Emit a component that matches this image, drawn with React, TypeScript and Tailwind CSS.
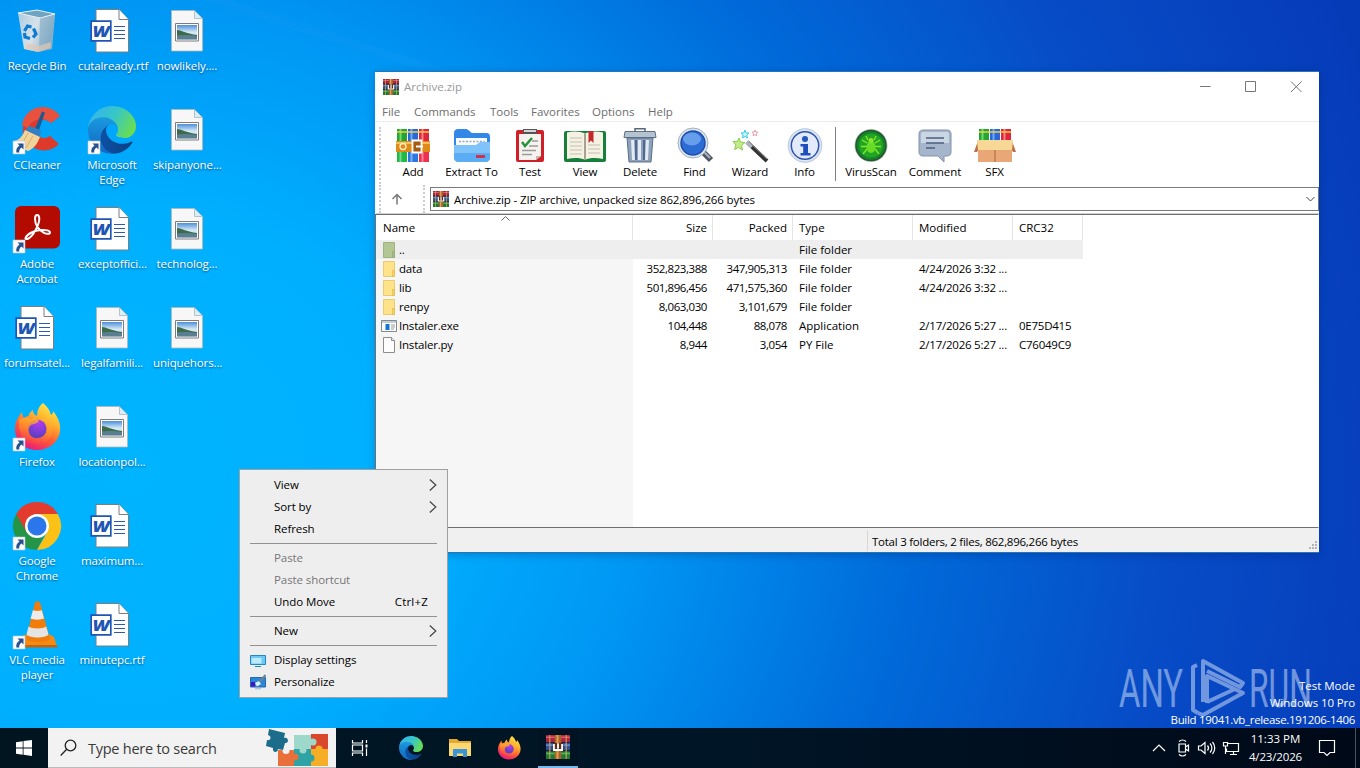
import type { ReactNode } from "react";

function Shortcut() {
    return (
        <g transform="translate(0 35)">
            <path d="M0 0h12v13H0z" fill="#fbfbfd" stroke="#b9c7d6" strokeWidth=".6" />
            <path
                d="M4.5 2.5h6v6l-1.9-1.9C6.6 8 6 9.6 6.2 11.5H3.4C2.8 8.5 3.9 6.3 6.5 4.5z"
                fill="#27508f"
            />
        </g>
    );
}

function Svg48({ children }: { children: ReactNode }) {
    return (
        <svg className="block h-12 w-12 overflow-visible" viewBox="0 0 48 48">
            {children}
        </svg>
    );
}

function RecycleBin() {
    return (
        <Svg48>
            <defs>
                <linearGradient id="bin" x1="0" x2="1" y2=".4">
                    <stop offset="0" stopColor="#a9cbdf" />
                    <stop offset=".55" stopColor="#d6e2ea" />
                    <stop offset="1" stopColor="#8fb3c9" />
                </linearGradient>
            </defs>
            <path d="M5 6 24 3l18 4-3 35-14 3-14-3z" fill="url(#bin)" />
            <path d="M27 11 42 7l-4 35-12 3z" fill="#7fa9c4" opacity=".6" />
            <path d="m5 6 19-3 18 4-15 4z" fill="#6fa3c2" stroke="#e9f1f5" />
            <path d="m14 36 11 3 13-4-.5 6L25 45l-13-3z" fill="#e2c7b4" opacity=".7" />
            <g fill="none" stroke="#0f7ad2" strokeWidth="3.2">
                <path d="m11.5 24 3-5 4 1" />
                <path d="m20.5 21.5 2.5 5.5-3 3.5" />
                <path d="M17 31.5 12 30l-.5-4" />
            </g>
        </Svg48>
    );
}

function WordDoc() {
    return (
        <Svg48>
            <path d="M8 2.5h23l9.5 10V45H8z" fill="#fff" stroke="#7d7d7d" />
            <path d="M31 2.5v10h9.5" fill="#fff" stroke="#7d7d7d" />
            <path
                d="M26 19.5h11M26 23.5h11M26 27.5h11M26 31.5h11"
                stroke="#2b5ab5"
                strokeWidth="1.2"
            />
            <path d="M3.2 14.2h19.6v19.6H3.2z" fill="#fff" stroke="#1f56b4" strokeWidth="1.7" />
            <text
                x="13"
                y="30"
                textAnchor="middle"
                textLength="17"
                lengthAdjust="spacingAndGlyphs"
                fill="#1f56b4"
                className="font-['Open_Sans',sans-serif] text-[16.5px] font-extrabold italic"
            >
                W
            </text>
        </Svg48>
    );
}

function ImageDoc() {
    return (
        <Svg48>
            <defs>
                <linearGradient id="sky" x2="0" y2="1">
                    <stop offset="0" stopColor="#4d8edb" />
                    <stop offset=".5" stopColor="#d5eaf5" />
                    <stop offset="1" stopColor="#b9d2dc" />
                </linearGradient>
            </defs>
            <path d="M8.5 3.5h23l8 8V44h-31z" fill="#f7f7f7" stroke="#b5b5b5" strokeWidth=".8" />
            <path d="M31.5 3.5v8h8z" fill="#d9eef6" stroke="#a9b5bb" strokeWidth=".8" />
            <path d="M12.5 16.5h23V34h-23z" fill="#fff" stroke="#7c7c7c" />
            <path d="M14 18h20v14.5H14z" fill="url(#sky)" />
            <path d="M14 23c5 .5 10 3.5 20 5v1H14z" fill="#3c6b4a" />
            <path d="M14 28.5c6-1 12-.5 20 .5v3.5H14z" fill="#5b7f92" />
        </Svg48>
    );
}

function CCleaner() {
    return (
        <Svg48>
            <path d="M47 10A21 21 0 1 0 46 38l-9-8a9 9 0 1 1 1-13z" fill="#dd3a2c" />
            <path d="M47 10A21 21 0 0 0 9 19l6 3a14 14 0 0 1 23-5z" fill="#e8513e" />
            <path d="M29 5.5 32 6.5 26 24l-4-1.5z" fill="#1c5a96" />
            <path d="m16 20 12 4-1.5 7L12 25z" fill="#2f80c4" />
            <path d="M12 24 27 31c-3 8-7 12-12 14C9 43 4 39 1 35c6-1 9-6 11-11z" fill="#f2d49b" />
            <path d="m15 27-7 13M20 30l-7 12" stroke="#d7ae6a" />
            <Shortcut />
        </Svg48>
    );
}

function EdgeLogo() {
    return (
        <>
            <defs>
                <linearGradient id="edgeDark" x1=".2" x2="1" y1=".7" y2=".7">
                    <stop offset="0" stopColor="#0c4fa0" />
                    <stop offset="1" stopColor="#0b3f82" />
                </linearGradient>
                <linearGradient id="edgeBlue" x1=".5" x2=".4" y1="0" y2="1">
                    <stop offset="0" stopColor="#1b9de2" />
                    <stop offset="1" stopColor="#1367c0" />
                </linearGradient>
                <linearGradient id="edgeGreen" x1="0" x2="1" y1=".2" y2=".6">
                    <stop offset="0" stopColor="#35b4ef" />
                    <stop offset=".5" stopColor="#36c6c9" />
                    <stop offset="1" stopColor="#6ade50" />
                </linearGradient>
            </defs>
            <path
                fill="url(#edgeDark)"
                d="M231.1 190.5c-3.4 1.8-6.9 3.4-10.5 4.7a101.9 101.9 0 0 1-35.9 6.5c-47.3 0-88.5-32.5-88.5-74.3A31.5 31.5 0 0 1 112.6 100c-42.8 1.8-53.8 46.4-53.8 72.5 0 73.9 68.1 81.4 82.8 81.4 7.9 0 19.8-2.3 27-4.6l1.3-.4a128.3 128.3 0 0 0 66.6-52.8 4 4 0 0 0-5.4-5.6z"
            />
            <path
                fill="url(#edgeBlue)"
                d="M105.7 241.4a79.2 79.2 0 0 1-22.7-21.3 80.7 80.7 0 0 1 29.5-120c3.2-1.5 8.5-4.1 15.6-4a32.4 32.4 0 0 1 25.7 13 31.9 31.9 0 0 1 6.3 18.7c0-.2 24.5-79.6-80-79.6-43.9 0-80 41.6-80 78.2 0 19 4.1 38 11.9 55.4a128 128 0 0 0 156.4 67 75.5 75.5 0 0 1-62.7-7.4z"
            />
            <path
                fill="url(#edgeGreen)"
                d="M152.3 148.9c-.8 1-3.3 2.5-3.3 5.7 0 2.6 1.7 5.1 4.7 7.2 14.4 10 41.5 8.7 41.6 8.7 10.7 0 21.1-2.9 30.3-8.3a61.4 61.4 0 0 0 30.4-52.9c.3-22.4-8-37.3-11.3-43.9C223.5 23.9 177.7 0 128 0A128 128 0 0 0 0 126.2c.5-36.5 36.8-66 80-66 3.5 0 23.5.3 42 10.1 16.3 8.6 24.9 18.9 30.8 29.2 6.2 10.7 7.3 24.2 7.3 29.6 0 5.4-2.7 13.3-7.8 19.9z"
            />
        </>
    );
}

function Edge() {
    return (
        <Svg48>
            <g transform="scale(.1875)">
                <EdgeLogo />
            </g>
            <Shortcut />
        </Svg48>
    );
}

function Acrobat() {
    return (
        <Svg48>
            <rect x="2" y="1" width="45" height="42.5" rx="6" fill="#b30b00" />
            <path
                d="M12.5 33c2-4.5 9-7.5 15.5-8 5-.4 9 .6 9 2.4s-3.5 1.8-6 .4c-6-3.3-9-9-9-14 0-5 4.3-5 4.3 0 0 6-6.3 17.5-10.8 19.7-1.8.8-3.6.7-3-.5z"
                fill="none"
                stroke="#fff"
                strokeWidth="2"
            />
            <Shortcut />
        </Svg48>
    );
}

function FirefoxLogo() {
    return (
        <>
            <defs>
                <linearGradient id="foxBody" x1=".8" x2=".3" y1="0" y2="1">
                    <stop offset="0" stopColor="#fff04a" />
                    <stop offset=".35" stopColor="#ffb02e" />
                    <stop offset=".65" stopColor="#ff5a36" />
                    <stop offset="1" stopColor="#e8187f" />
                </linearGradient>
                <linearGradient id="foxRing" x1=".7" x2=".3" y1="0" y2="1">
                    <stop offset="0" stopColor="#ffc02e" />
                    <stop offset=".5" stopColor="#ff8a2b" />
                    <stop offset="1" stopColor="#f8344f" />
                </linearGradient>
                <radialGradient id="foxCore" cx=".6" cy=".2" r=".9">
                    <stop offset="0" stopColor="#b13af0" />
                    <stop offset="1" stopColor="#4b40b8" />
                </radialGradient>
            </defs>
            <path
                d="M30 0c5 4 7 8 8 12 2-1 2-3 2-4 5 6 8 13 7 20C46 39 36 47 24 47 11 47 2 38 2 26c0-7 3-12 7-17 0 3 1 5 2 6 1-1 3-2 5-2-1-1 2-5 4-6 0 3 1 5 4 6C24 8 26 3 30 0z"
                fill="url(#foxBody)"
            />
            <circle cx="24" cy="26" r="9.5" fill="url(#foxCore)" />
            <path
                d="M6 17c4-3 9-2 12-1 4-1 7 0 8 2-2 3-6 3-8 4-2 2-3 4-2 7 1 4 4 6 8 6 6 0 10-4 10-10 0-5-3-8-5-9 8 1 12 7 10 14-2 8-8 11-15 11C13 41 5 33 6 17z"
                fill="url(#foxRing)"
                opacity=".8"
            />
        </>
    );
}

function Firefox() {
    return (
        <Svg48>
            <FirefoxLogo />
            <Shortcut />
        </Svg48>
    );
}

function Chrome() {
    return (
        <Svg48>
            <path d="M24 24 3.2 12A24 24 0 0 0 24 48l9-18z" fill="#249446" />
            <path d="M24 12h20.8A24 24 0 0 1 24 48l10.4-18z" fill="#fbc116" />
            <path d="M24 12h20.8A24 24 0 0 0 3.2 12l10.4 18z" fill="#e33b2e" />
            <circle cx="24" cy="24" r="12" fill="#fff" />
            <circle cx="24" cy="24" r="9.5" fill="#2a76ea" />
            <Shortcut />
        </Svg48>
    );
}

function Vlc() {
    return (
        <Svg48>
            <path d="m11 34-3 2-2 9.5h38L41 36l-3-2z" fill="#f58a12" />
            <path d="M6 44h38l.4 2.5H5.5z" fill="#c9630a" />
            <path d="M22 1.5c1-1.3 4-1.3 5 0L37 38c-3 4-21 4-24 0z" fill="#f07c0c" />
            <path d="m20 9-2.4 8.5c3 1.5 10 1.5 13.4 0L28.8 9c-2 1.2-6.8 1.2-8.8 0z" fill="#ececec" />
            <path d="m15.5 25.5-2 8c3 4 19 4 22 0l-2.3-8c-3 2.6-14.7 2.6-17.7 0z" fill="#e4e4e4" />
            <Shortcut />
        </Svg48>
    );
}

function WinRar({ className }: { className: string }) {
    return (
        <svg className={className} viewBox="0 0 16 16">
            <path d="M0 0h16v5.3H0z" fill="#a82443" />
            <path d="M0 5.3h16v5.4H0z" fill="#2b4f9c" />
            <path d="M0 10.7h16V16H0z" fill="#1f7a38" />
            <path d="M0 1h16v1H0z" fill="#e5576b" />
            <path d="M0 6.2h16v1.1H0z" fill="#5a8de0" />
            <path d="M0 11.7h16v1.2H0z" fill="#4bb45a" />
            <path d="M0 4.6h16v.8H0zM0 10h16v.8H0z" fill="#281c33" />
            <path d="M2 0h1v16H2zM13 0h1v16h-1z" fill="#d9a548" opacity=".7" />
            <path d="M5.8 0h4.4v16H5.8z" fill="#a8622a" />
            <path d="M7 0h1.3v16H7z" fill="#e7a14d" />
            <path d="M4.5 5.3h7v5.4h-7z" fill="#5a2f18" />
            <path d="M5.3 6v4h5.4V6M8 5.5v3.7" fill="none" stroke="#fff" strokeWidth="1.2" />
        </svg>
    );
}

function Books() {
    return (
        <>
            <path d="M2 1h10v12H2z" fill="#25a533" />
            <path d="M13 1h10v12H13z" fill="#2869d8" />
            <path d="M24 1h10v12H24z" fill="#e0263d" />
            <path d="M4.5 1h2v12h-2z" fill="#74dc6c" />
            <path d="M15.5 1h2v12h-2z" fill="#75a9f6" />
            <path d="M26.5 1h2v12h-2z" fill="#ff8181" />
            <path d="M2 4h32" stroke="#f1cf45" strokeWidth="1.5" />
        </>
    );
}

const toolIcons: Record<string, ReactNode> = {
    Add: (
        <>
            <Books />
            <path d="M2 13h10v21H2z" fill="#21ba45" />
            <path d="M13 13h10v21H13z" fill="#2a78e4" />
            <path d="M24 13h10v21H24z" fill="#ef3150" />
            <path d="M4.5 13h2v21h-2zM15.5 13h2v21h-2zM26.5 13h2v21h-2z" fill="#fff" opacity=".4" />
            <path d="M1 13h34v11H1z" fill="#e08a17" />
            <path d="M1 14h34v2H1z" fill="#f8bf5c" />
            <circle cx="8" cy="18.5" r="3" fill="none" stroke="#fff1c9" strokeWidth="1.3" />
            <path d="M17.5 12.5h9v12h-9z" fill="#a65b10" stroke="#fff" strokeWidth="1.8" />
            <path d="M21 18.5h7" stroke="#fff" strokeWidth="2" />
        </>
    ),
    "Extract To": (
        <>
            <path d="M0 5c0-3 2-4 4-4h8c3 0 4 4 7 4h13c3 0 4 1 4 4v20H0z" fill="#3387e6" />
            <path d="M2 10h31v14H2z" fill="#f9fcff" />
            <path d="M5 13.5h26" stroke="#9aa8b8" strokeWidth="1.3" strokeDasharray="2 1.5" />
            <path d="M0 17h22l4-3h10v16c0 2-2 4-4 4H4c-2 0-4-2-4-4z" fill="#7fc3fa" />
            <path d="M0 25h36v5c0 2-2 4-4 4H4c-2 0-4-2-4-4z" fill="#5badf5" />
            <path d="M22 28.5h9" stroke="#d82c3c" strokeWidth="2.8" />
        </>
    ),
    Test: (
        <>
            <rect x="4" y="2" width="28" height="32" rx="2" fill="#cf2029" />
            <path d="M7 6h22v22l-5 4H7z" fill="#f6f3ee" />
            <path d="M24 32v-4h5z" fill="#b9b9b9" />
            <path d="M11 1h14v5H11z" fill="#555" />
            <path d="M12 2h12v2H12z" fill="#d5d5d5" />
            <path d="m10 14 3 4 7-8" fill="none" stroke="#23953c" strokeWidth="2.5" />
            <path d="M17 18h9M10 22.5h14M10 26.5h10M20 13h6" stroke="#9a9a9a" strokeWidth="1.3" />
        </>
    ),
    View: (
        <g transform="translate(-3)">
            <rect x="0" y="3" width="42" height="31" rx="2" fill="#16803a" />
            <path d="M3 4.5c7-2 14-1 18 1 4-2 11-3 18-1V31c-7-1.5-14-1-18 .8-4-1.8-11-2.3-18-.8z" fill="#f6f2e3" />
            <path d="M21 5.5v26" stroke="#8c8672" strokeWidth="1.5" />
            <path
                d="M6 10h12M6 14h12M6 18h12M6 22h12M6 26h12M24 17h12M24 21h12M24 25h12"
                stroke="#c3bfb2"
                strokeWidth="1.2"
            />
            <path d="M24.5 3h5v12l-2.5-2.5-2.5 2.5z" fill="#c7252d" />
        </g>
    ),
    Delete: (
        <>
            <path d="M13 3V.8h10V3" fill="none" stroke="#596878" strokeWidth="1.5" />
            <path d="M3 3.5h30l1 6H2z" fill="#b5c2d0" stroke="#5d6f84" />
            <path d="M5 10h26l-2 24H7z" fill="#8ca1bb" stroke="#5d6f84" />
            <path d="M9 12h3l1 20H10zM16 12h3v20h-3zM24 12h3l-1 20h-3z" fill="#e1eaf4" />
            <path d="M13 12h2v20h-2zM21 12h2v20h-2z" fill="#52688a" />
        </>
    ),
    Find: (
        <>
            <path d="m26 24 8 8" stroke="#4e5561" strokeWidth="6" />
            <path d="m26 23 7 7" stroke="#a8b3c0" strokeWidth="2" />
            <circle cx="16" cy="15" r="15" fill="#dfe6ee" stroke="#a3b0c0" />
            <circle cx="16" cy="15" r="12" fill="#2d6bd5" stroke="#1c4ea8" strokeWidth="1.5" />
            <ellipse cx="15" cy="11" rx="9" ry="6.5" fill="#80b3f5" opacity=".7" />
        </>
    ),
    Wizard: (
        <>
            <path d="m15 14 20 19" stroke="#333" strokeWidth="4" />
            <path d="m15 14 5 4.7" stroke="#aeb5bd" strokeWidth="4" />
            <path d="m17 14 18 17" stroke="#8a8a8a" />
            <path d="m7 10 1.5 4 4.5.5-3.5 3 1 4.5-4-2.5-4 2 1.5-4.5L1 13.5l4.5-.2z" fill="#c2ec87" stroke="#8bcb4b" />
            <path d="m13 2 1 2.8 3 .2-2.3 2 .8 3-2.5-1.6L10.5 10l.7-3L9 5l3-.2z" fill="#c6f4fc" stroke="#3ecbe8" />
            <path d="m23 2 .8 2 2 .2-1.5 1.5.4 2L23 6.7l-1.8 1 .4-2L20 4.2l2.2-.2z" fill="#fff" stroke="#e48596" strokeWidth=".8" />
        </>
    ),
    Info: (
        <>
            <circle cx="18" cy="17.5" r="16.8" fill="#dce4f1" stroke="#b9c7e1" />
            <circle cx="18" cy="17.5" r="13.7" fill="#e3ebfa" stroke="#2d55ae" strokeWidth="1.5" />
            <circle cx="18" cy="11" r="3" fill="#2456bd" />
            <path d="M13.5 16H21v9h2.5v2.5h-10V25h2.7v-6.5h-2.7z" fill="#1d50bd" />
        </>
    ),
    VirusScan: (
        <>
            <circle cx="18" cy="17.5" r="16.5" fill="#b9c4b7" />
            <circle cx="18" cy="17.5" r="15" fill="#14842a" stroke="#235730" strokeWidth="1.5" />
            <circle cx="18" cy="17.5" r="12" fill="#22a522" />
            <path
                d="m15 12-2-4M21 12l2-4M14 15l-5-3M22 15l5-3M14 18.5H8M22 18.5h6M14 21l-4 5M22 21l4 5"
                stroke="#89e62e"
                strokeWidth="1.3"
            />
            <ellipse cx="18" cy="19" rx="4.5" ry="6" fill="#67dc27" />
            <circle cx="18" cy="12.5" r="2.5" fill="#89e62e" />
        </>
    ),
    Comment: (
        <>
            <path
                d="M6 2h24c3 0 4 2 4 4v18c0 3-2 4-4 4h-3v6l-6-6H6c-3 0-4-2-4-4V6c0-3 2-4 4-4z"
                fill="#a5b5cb"
                stroke="#8392aa"
            />
            <path d="M6 4h24c1 0 2 1 2 2v9H4V6c0-1 1-2 2-2z" fill="#d4deeb" opacity=".8" />
            <path d="M9 10h18M9 15h18M9 20h9" stroke="#4b5e7e" strokeWidth="1.7" />
        </>
    ),
    SFX: (
        <>
            <Books />
            <path d="M1 13h34v21H1z" fill="#e9a676" />
            <path d="m1 13-4 11h3l3-5zM35 13l4 11h-3l-3-5z" fill="#bd7044" />
            <path d="M0 12h36l-1 10H1z" fill="#f7d897" />
            <path d="M18 22v12" stroke="#a76741" />
        </>
    ),
};

type Tool = [name: string, className: string];

const tools: Tool[] = [
    ["Add", "w-[52px]"],
    ["Extract To", "w-[65px]"],
    ["Test", "w-[52px]"],
    ["View", "w-[58px]"],
    ["Delete", "w-[52px]"],
    ["Find", "w-[57px]"],
    ["Wizard", "w-[54px]"],
    ["Info", "w-[55px]"],
];

const extraTools: Tool[] = [
    ["VirusScan", "w-[64px]"],
    ["Comment", "w-[64px]"],
    ["SFX", "w-[55px]"],
];

function ToolButton({ name, className }: { name: string; className: string }) {
    return (
        <div className={`flex flex-col items-center ${className}`}>
            <svg className="block h-[35px] w-9 overflow-visible" viewBox="0 0 36 35">
                {toolIcons[name]}
            </svg>
            <span className="mt-px leading-[15px] tracking-[-0.1px] whitespace-nowrap">{name}</span>
        </div>
    );
}

const desktop: [label: string, icon: ReactNode][][] = [
    [
        ["Recycle Bin", <RecycleBin />],
        ["CCleaner", <CCleaner />],
        ["Adobe Acrobat", <Acrobat />],
        ["forumsatel...", <WordDoc />],
        ["Firefox", <Firefox />],
        ["Google Chrome", <Chrome />],
        ["VLC media player", <Vlc />],
    ],
    [
        ["cutalready.rtf", <WordDoc />],
        ["Microsoft Edge", <Edge />],
        ["exceptoffici...", <WordDoc />],
        ["legalfamili...", <ImageDoc />],
        ["locationpol...", <ImageDoc />],
        ["maximum...", <WordDoc />],
        ["minutepc.rtf", <WordDoc />],
    ],
    [
        ["nowlikely....", <ImageDoc />],
        ["skipanyone...", <ImageDoc />],
        ["technolog...", <ImageDoc />],
        ["uniquehors...", <ImageDoc />],
    ],
];

function DesktopIcons() {
    return (
        <div className="flex">
            {desktop.map((column, i) => (
                <div key={i} className="w-[75px]">
                    {column.map(([label, icon]) => (
                        <div key={label} className="h-[99px] pt-[7px]">
                            <div className="pl-[13px]">{icon}</div>
                            <p className="-mr-1 -ml-[5px] mt-[3px] px-2 text-center leading-[15px] text-white [text-shadow:0_1px_2px_rgba(0,40,90,0.7)]">
                                {label}
                            </p>
                        </div>
                    ))}
                </div>
            ))}
        </div>
    );
}

function FileIcon({ kind }: { kind: string }) {
    if (kind === "exe") {
        return (
            <svg className="h-4 w-4" viewBox="0 0 16 16">
                <path d="M.5 2.5h15v11H.5z" fill="#fff" stroke="#7d8a94" />
                <path d="M1 3h14v2H1z" fill="#c3cdd4" />
                <path d="M4.5 6h4v6h-4z" fill="#1176d2" />
                <path d="M10 7h4M10 9h4M10 11h3" stroke="#8e9aa3" />
            </svg>
        );
    }
    if (kind === "py") {
        return (
            <svg className="h-4 w-4" viewBox="0 0 16 16">
                <path d="M2.5.5h8l3 3v12h-11z" fill="#fdfdfd" stroke="#8d8d8d" />
                <path d="M10.5.5v3h3" fill="#e5eef3" stroke="#8d8d8d" />
            </svg>
        );
    }
    const up = kind === "up";
    return (
        <svg className="h-4 w-4" viewBox="0 0 16 16">
            <path d="M2.5.5h11v15h-11z" fill={up ? "#b3c795" : "#ffe38b"} stroke={up ? "#9db381" : "#ebcb6a"} />
            <path d="M11.5 9.5h2v6h-2z" fill={up ? "#a5bc86" : "#fbd566"} stroke={up ? "#93aa78" : "#e0b94c"} strokeWidth=".7" />
        </svg>
    );
}

const files = [
    ["up", "..", "", "", "File folder", "", ""],
    ["folder", "data", "352,823,388", "347,905,313", "File folder", "4/24/2026 3:32 ...", ""],
    ["folder", "lib", "501,896,456", "471,575,360", "File folder", "4/24/2026 3:32 ...", ""],
    ["folder", "renpy", "8,063,030", "3,101,679", "File folder", "", ""],
    ["exe", "Instaler.exe", "104,448", "88,078", "Application", "2/17/2026 5:27 ...", "0E75D415"],
    ["py", "Instaler.py", "8,944", "3,054", "PY File", "2/17/2026 5:27 ...", "C76049C9"],
];

const columns = "grid grid-cols-[257px_80px_80px_120px_100px_70px]";

function ArchiveWindow() {
    return (
        <section className="absolute top-[71px] left-[375px] flex h-[482px] w-[944px] flex-col border-y border-[#2874b8] bg-white pl-px shadow-[0_2px_8px_rgba(0,20,80,0.25)]">
            <header className="flex h-[30px] items-center pl-[7px] text-[#999]">
                <WinRar className="h-4 w-4" />
                <span className="ml-[5px] grow">Archive.zip</span>
                <svg className="mr-1 h-[30px] w-[138px]" viewBox="0 0 138 30" fill="none" stroke="#777">
                    <path d="M23 14.5h10.5M68.5 9.5h10v10h-10zM114 9.5l10.5 10.5M124.5 9.5 114 20" />
                </svg>
            </header>
            <nav className="flex h-5 items-center border-b border-[#ececec] pl-1.5 text-[#6d6d6d]">
                <span className="w-8">File</span>
                <span className="w-[76px]">Commands</span>
                <span className="w-[41px]">Tools</span>
                <span className="w-[61px]">Favorites</span>
                <span className="w-14">Options</span>
                <span>Help</span>
            </nav>
            <div className="flex h-[62px] pt-[5px]">
                <div className="ml-[3px] h-[57px] border-l-2 border-dotted border-[#c9ccd2]" />
                <div className="flex pt-px pl-[6px]">
                    {tools.map(([name, className]) => (
                        <ToolButton key={name} name={name} className={className} />
                    ))}
                </div>
                <div className="ml-[3px] h-[54px] border-l border-[#808080]" />
                <div className="flex pt-px pl-[3px]">
                    {extraTools.map(([name, className]) => (
                        <ToolButton key={name} name={name} className={className} />
                    ))}
                </div>
            </div>
            <div className="flex h-[30px] items-center border-b border-[#d0d0d0] bg-white">
                <div className="ml-[3px] h-7 border-l-2 border-dotted border-[#c9ccd2]" />
                <svg className="ml-[10px] h-3 w-3" viewBox="0 0 12 12" fill="none" stroke="#777" strokeWidth="1.5">
                    <path d="M6 11.5V1.5M1.5 6 6 1.5 10.5 6" />
                </svg>
                <div className="mr-[5px] ml-5 h-7 border-l-2 border-dotted border-[#c9ccd2]" />
                <div className="flex h-6 grow items-center border border-[#7a7a7a] pl-[2px]">
                    <WinRar className="h-4 w-4" />
                    <span className="mt-[2px] ml-[5px] grow tracking-[-0.12px]">
                        Archive.zip - ZIP archive, unpacked size 862,896,266 bytes
                    </span>
                    <svg className="mr-[3px] h-2 w-[9px]" viewBox="0 0 9 8" fill="none" stroke="#444">
                        <path d="m.5 2 4 4 4-4" />
                    </svg>
                </div>
            </div>
            <div className="relative -ml-px grow border border-[#6f6f6f] border-r-white bg-[linear-gradient(90deg,#f6f6f6_257px,#fff_257px)]">
                <svg className="absolute top-[1px] left-[125px] h-[5px] w-[9px]" viewBox="0 0 9 5" fill="none" stroke="#666">
                    <path d="m.5 4.5 4-4 4 4" />
                </svg>
                <div className={`${columns} h-[25px] w-[707px] items-center bg-white leading-[25px] [&>span]:border-r [&>span]:border-[#e5e5e5] [&>span]:pr-[5px] [&>span]:pl-[6px]`}>
                    <span className="pl-[7px]!">Name</span>
                    <span className="text-right">Size</span>
                    <span className="text-right">Packed</span>
                    <span>Type</span>
                    <span>Modified</span>
                    <span>CRC32</span>
                </div>
                {files.map(([kind, name, size, packed, type, modified, crc]) => (
                    <div
                        key={name}
                        className={`${columns} h-[19px] w-[707px] items-center leading-[19px] whitespace-nowrap ${kind === "up" ? "bg-[#eee]" : ""}`}
                    >
                        <span className="flex items-center pl-[5px]">
                            <FileIcon kind={kind} />
                            <span className="ml-[2px] tracking-[-0.2px]">{name}</span>
                        </span>
                        <span className="pr-[6px] text-right tracking-[-0.42px]">{size}</span>
                        <span className="pr-[6px] text-right tracking-[-0.42px]">{packed}</span>
                        <span className="pl-[6px]">{type}</span>
                        <span className="pl-[6px] tracking-[-0.24px]">{modified}</span>
                        <span className="pl-[6px] tracking-[-0.24px]">{crc}</span>
                    </div>
                ))}
            </div>
            <footer className="-ml-px flex h-6 items-center justify-between bg-[#f0f0f0] pl-px">
                <div className="ml-[491px] h-[21px] border-l border-[#d7d7d7] pl-1 leading-[23px] tracking-[-0.25px]">
                    Total 3 folders, 2 files, 862,896,266 bytes
                </div>
                <svg className="mt-3 h-3 w-3" viewBox="0 0 12 12" fill="#b5b5b5">
                    <path d="M8 1h2v2H8zM8 4h2v2H8zM8 7h2v2H8zM5 4h2v2H5zM5 7h2v2H5zM2 7h2v2H2z" />
                </svg>
            </footer>
        </section>
    );
}

function MenuItem({
    label,
    icon,
    hint,
    arrow,
    disabled,
}: {
    label: string;
    icon?: ReactNode;
    hint?: string;
    arrow?: boolean;
    disabled?: boolean;
}) {
    return (
        <div className={`flex h-[22px] items-center pr-[10px] pl-[10px] ${disabled ? "text-[#777]" : ""}`}>
            <span className="w-6">{icon}</span>
            <span className="grow">{label}</span>
            {hint && <span className="mr-[9px] tracking-[0.2px]">{hint}</span>}
            {arrow && (
                <svg className="h-3 w-2" viewBox="0 0 8 12" fill="none" stroke="#444" strokeWidth="1.2">
                    <path d="m.8.5 6 5.5-6 5.5" />
                </svg>
            )}
        </div>
    );
}

function Divider() {
    return (
        <div className="px-[10px] py-[3px]">
            <div className="h-px bg-[#919191]" />
        </div>
    );
}

function ContextMenu() {
    return (
        <div className="absolute top-[469px] left-[239px] h-[229px] w-[209px] border border-[#a0a0a0] bg-[#eee] pt-1 tracking-[-0.08px]">
            <MenuItem label="View" arrow />
            <MenuItem label="Sort by" arrow />
            <MenuItem label="Refresh" />
            <Divider />
            <MenuItem label="Paste" disabled />
            <MenuItem label="Paste shortcut" disabled />
            <MenuItem label="Undo Move" hint="Ctrl+Z" />
            <Divider />
            <MenuItem label="New" arrow />
            <Divider />
            <MenuItem
                label="Display settings"
                icon={
                    <svg className="h-4 w-4" viewBox="0 0 16 16">
                        <path d="M.5 3.5h15v9H.5z" fill="#6ccaf2" stroke="#2387c5" />
                        <path d="M1.5 6h10v5.5h-10z" fill="#bdeafb" />
                        <path d="M5 14.5h6" stroke="#2387c5" />
                    </svg>
                }
            />
            <MenuItem
                label="Personalize"
                icon={
                    <svg className="h-4 w-4" viewBox="0 0 16 16">
                        <path d="M.5 3.5h15v9.5H.5z" fill="#2a86d6" stroke="#2769ad" />
                        <path d="M1 8h4v4.500H1z" fill="#4412c9" />
                        <path d="m5 9 4-2 2 3-4 2.5z" fill="#dff1fd" />
                        <path d="m15.5 1-6 7" stroke="#6b8297" strokeWidth="2" />
                        <path d="M5 14.8h6" stroke="#97b9d4" />
                    </svg>
                }
            />
        </div>
    );
}

function Watermark() {
    return (
        <div className="absolute right-[5px] bottom-10 h-[76px] w-[240px] text-right text-white">
            <svg className="absolute top-0 left-[3px] h-[76px] w-[195px] overflow-visible" viewBox="0 0 195 76">
                <g opacity=".5" fill="#dbe6fa" className="font-[Roboto,sans-serif] text-[53px]">
                    <text x="1" y="55" textLength="64" lengthAdjust="spacingAndGlyphs">
                        ANY
                    </text>
                    <text x="131" y="55" textLength="63" lengthAdjust="spacingAndGlyphs">
                        RUN
                    </text>
                    <g fill="none" stroke="#dbe6fa" strokeWidth="4" strokeLinejoin="round">
                        <path d="M79 13l-4 2v43l5 3" />
                        <path d="M85 50V9l40 22-3 4-33-16" />
                        <path d="M89 51V24l36 17-40 22-5-2" />
                        <path d="m89 50 28-13" />
                    </g>
                </g>
            </svg>
            <div className="relative pt-[25px] leading-[17px]">
                <p>Test Mode</p>
                <p className="tracking-[-0.1px]">Windows 10 Pro</p>
                <p className="tracking-[-0.32px] whitespace-nowrap">Build 19041.vb_release.191206-1406</p>
            </div>
        </div>
    );
}

function Puzzle() {
    return (
        <svg className="h-10 w-[62px]" viewBox="0 0 62 40">
            <path d="M12 22h18v16H12z" fill="#e8703a" />
            <path d="M28 7h18v16H28z" fill="#9ed8cb" />
            <path d="M45 6h17v17H45z" fill="#d9482b" />
            <path d="M28 21h18v17H28z" fill="#2da3a5" />
            <path d="M45 21h17v17H45z" fill="#f5ae26" />
            <circle cx="29" cy="29" r="3.5" fill="#e8703a" />
            <circle cx="47" cy="14" r="3.5" fill="#9ed8cb" />
            <circle cx="53" cy="21" r="3.5" fill="#f5ae26" />
            <circle cx="37" cy="22" r="3.5" fill="#9ed8cb" />
            <circle cx="45" cy="30" r="3.5" fill="#2da3a5" />
            <circle cx="20" cy="22.5" r="3.5" fill="#f2f2f2" />
            <path
                d="m3 1 16 4-1 5c4-2 6 5 1 5l-2 7-5-1c0 4-6 4-5-1l-7-2 1-6c4 1 5-4 1-5z"
                fill="#1c6d8b"
            />
        </svg>
    );
}

function Taskbar() {
    return (
        <footer className="flex h-10 bg-linear-to-r from-[#00151f] via-[#001627] via-50% to-[#000918] text-white">
            <div className="flex w-12 items-center justify-center">
                <svg className="h-4 w-4" viewBox="0 0 16 16" fill="#fff">
                    <path d="m0 2.2 6.7-1v6.4H0zM7.5 1.1 16 0v7.6H7.5zM0 8.4h6.7v6.4l-6.7-1zM7.5 8.4H16V16l-8.5-1.2z" />
                </svg>
            </div>
            <div className="flex w-72 items-center border-b border-[#bbb] bg-[#f2f2f2] pl-3">
                <svg className="h-[18px] w-[18px]" viewBox="0 0 18 18" fill="none" stroke="#222" strokeWidth="1.3">
                    <circle cx="10.5" cy="6.5" r="5.3" />
                    <path d="m6.7 10.3-6 6.2" />
                </svg>
                <span className="mt-[2px] ml-[10px] w-[178px] text-[14.5px] tracking-[-0.25px] text-[#3a3a3a]">Type here to search</span>
                <Puzzle />
            </div>
            <div className="flex w-12 items-center justify-center">
                <svg className="h-[18px] w-[18px]" viewBox="0 0 18 18" fill="none" stroke="#fff" strokeWidth="1.2">
                    <path d="M1.5 1v3h10V1M1.5 17v-3h10v3M1.5 6h10v6h-10zM15.5 1v3M15.5 9.5V17" />
                    <path d="M14.5 5.5h2v3h-2z" fill="#fff" stroke="none" />
                </svg>
            </div>
            <div className="flex w-[54px] items-center justify-center">
                <svg className="h-6 w-6" viewBox="0 0 256 256">
                    <EdgeLogo />
                </svg>
            </div>
            <div className="flex w-11 items-center justify-center">
                <svg className="h-[22px] w-[22px]" viewBox="0 0 22 22">
                    <path d="M0 2h8l2 2h12v15H0z" fill="#e6a92d" />
                    <path d="M0 6h22v13H0z" fill="#fbd872" />
                    <path d="M4 12h14v8h-4v-3.500H8V20H4z" fill="#3a94d8" />
                </svg>
            </div>
            <div className="flex w-[54px] items-center justify-center">
                <svg className="h-6 w-6" viewBox="0 0 48 48">
                    <FirefoxLogo />
                </svg>
            </div>
            <div className="ml-0.5 flex w-10 items-center justify-center border-b-2 border-[#76b9ed] bg-[#001322]">
                <WinRar className="h-6 w-6" />
            </div>
            <div className="grow" />
            <svg className="mt-[10px] -mr-px ml-px h-5 w-[90px]" viewBox="0 0 90 20" fill="none" stroke="#fff" strokeWidth="1.2">
                <path d="m2 13 6-6 6 6" />
                <path d="M28 6h6.500v8H28zM34.5 9l3-2v6l-3-2M28 3.5c2-1.8 5-1.8 7 0M28 16.5c2 1.8 5 1.8 7 0" />
                <path d="M47.5 8h2.500l4-3.500v11L50 12h-2.500zM56.5 7.5c1.3 1.5 1.3 3.5 0 5M59 5.5c2.500 2.500 2.500 6.500 0 9M61.5 4c3 3.500 3 8.500 0 12" />
                <path d="M76 5.5h11.500v8H75.500v-3M79 16.5h7M82.5 13.5v3M72.5 4.5h4v3.500h-4zM74.5 8v8" />
            </svg>
            <div className="w-[71px] pt-[2px] text-center leading-[18px]">
                <p>11:33 PM</p>
                <p className="tracking-[-0.15px]">4/23/2026</p>
            </div>
            <svg className="mt-[11px] mr-[19px] ml-[7px] h-[18px] w-[18px] overflow-visible" viewBox="0 0 18 18" fill="none" stroke="#fff" strokeWidth="1.2">
                <path d="M1.5 1.5h15v12h-4.500l-3 3-3-3H1.500z" />
            </svg>
            <div className="mr-[4px] border-l border-[#4a5260]" />
        </footer>
    );
}

export default function App() {
    return (
        <main className="relative flex h-[768px] w-[1360px] flex-col overflow-hidden bg-[radial-gradient(ellipse_1250px_1150px_at_130px_470px,#00b4ff_0%,#00b0ff_22%,#0098f4_40%,#006bda_62%,#074bc6_84%,#063bb8_105%)] font-['Open_Sans',sans-serif] text-[11.5px] text-black select-none">
            <div className="relative grow">
                <svg className="absolute inset-0 h-full w-full" viewBox="0 0 1360 728">
                    <path d="M200 0h30l220 70h-30z" fill="#2aa0ff" opacity=".12" />
                </svg>
                <div className="relative tracking-[-0.12px]">
                    <DesktopIcons />
                </div>
            </div>
            <Watermark />
            <ArchiveWindow />
            <ContextMenu />
            <Taskbar />
        </main>
    );
}
